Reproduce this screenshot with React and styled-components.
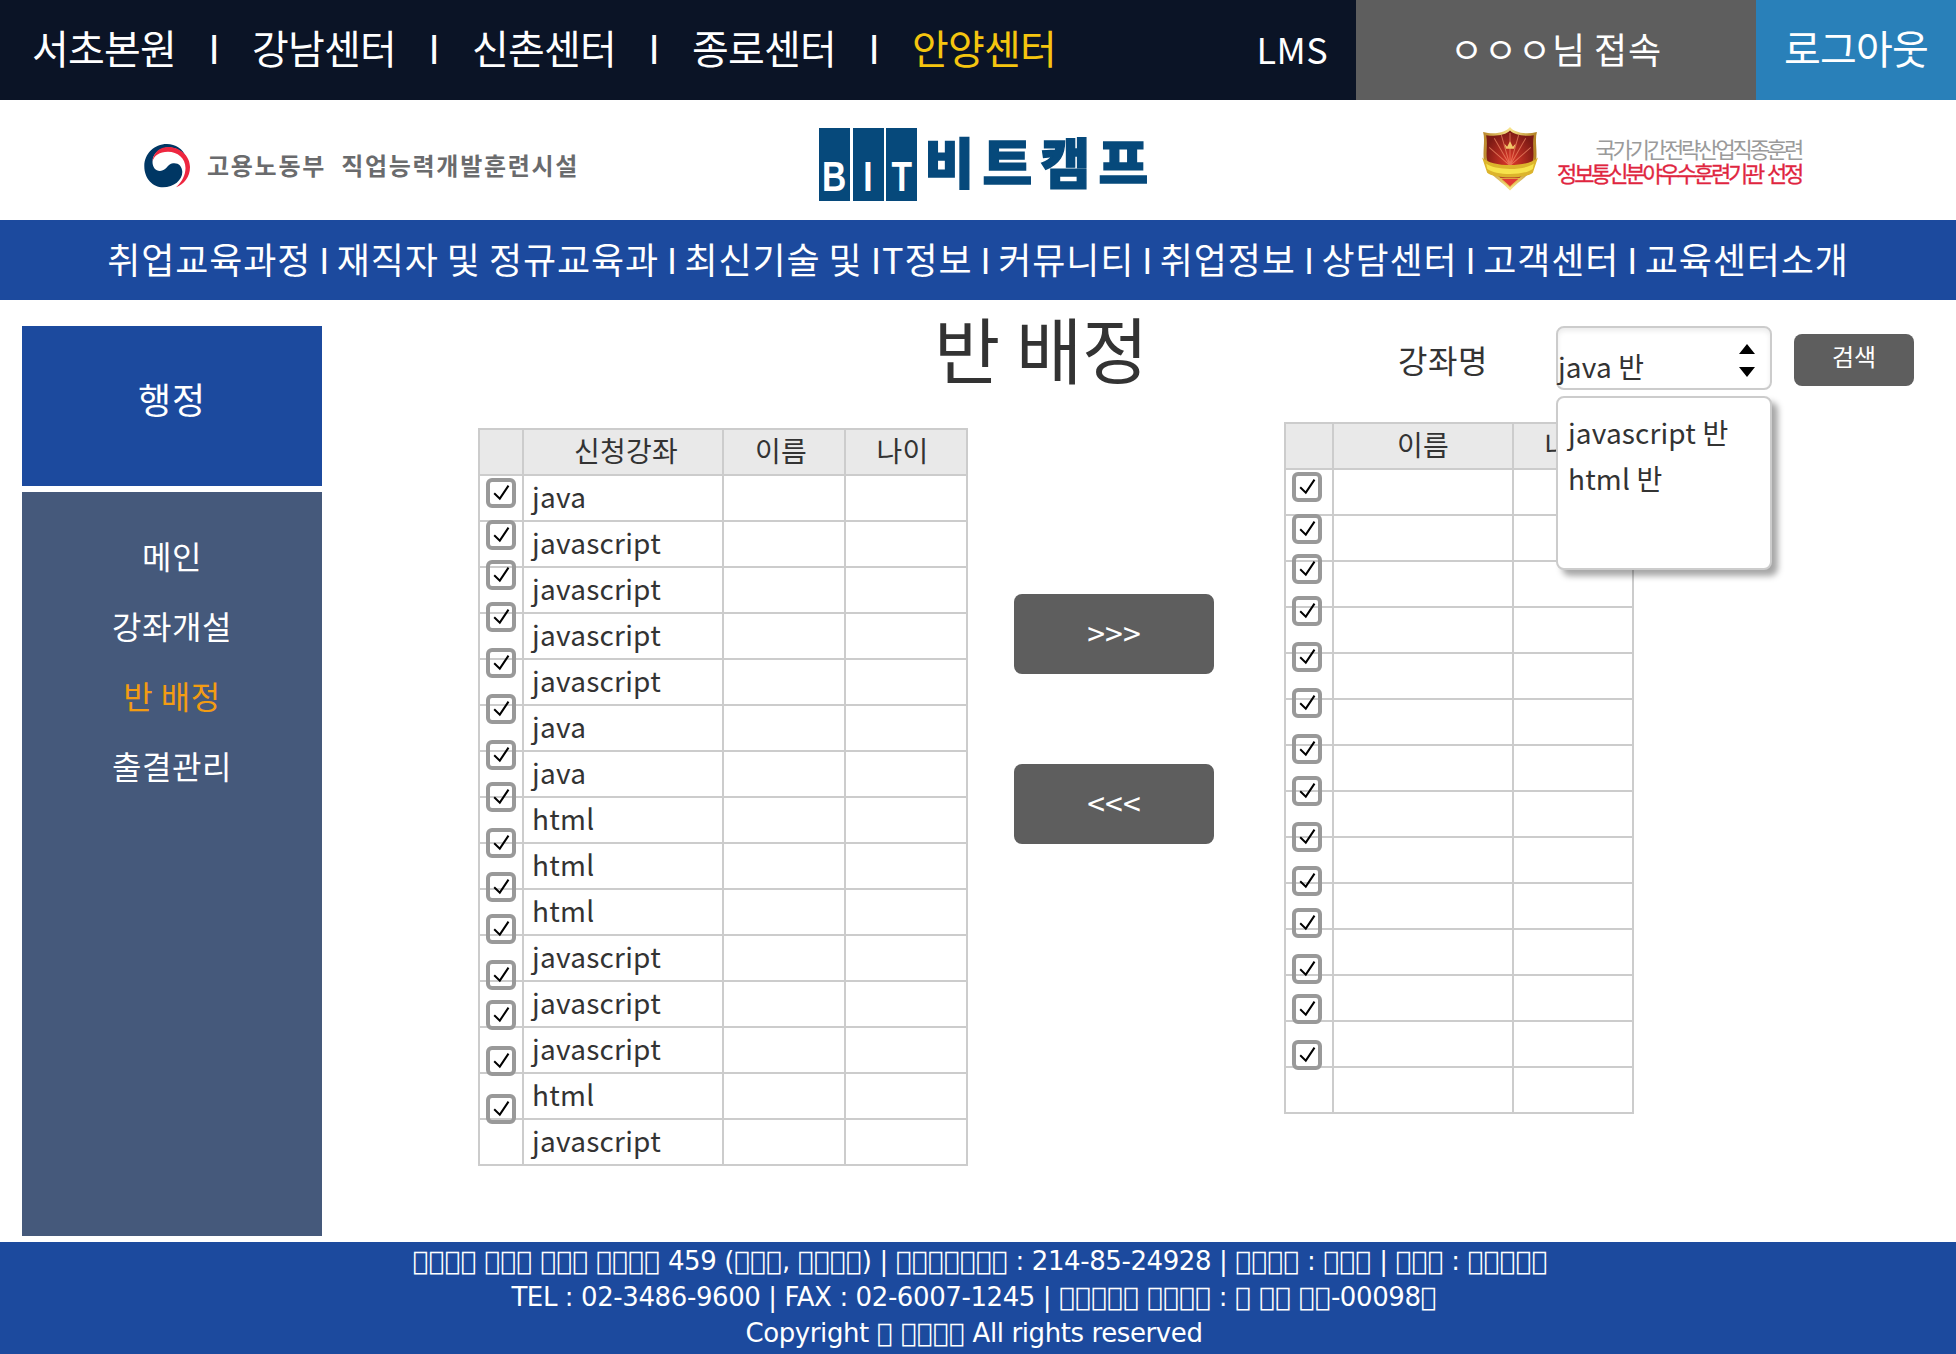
import React from "react";
import styled, { createGlobalStyle } from "styled-components";

const GlobalStyle = createGlobalStyle`
  * { box-sizing: border-box; }
  body {
    margin: 0;
    background: #fff;
    color: #333;
    font-family: "Noto Sans CJK KR", "Noto Sans", sans-serif;
  }
  ul { list-style: none; margin: 0; padding: 0; }
  button { font-family: inherit; border: 0; margin: 0; padding: 0; }
`;

const Page = styled.div`
  width: 1956px;
  height: 1354px;
  display: flex;
  flex-direction: column;
  overflow: hidden;
  white-space: nowrap;
`;

/* ---------- top bar ---------- */
const TopBar = styled.header`
  display: flex;
  height: 100px;
  flex: none;
  background: #0b1426;
  color: #fff;
  line-height: 1;
`;
const Centers = styled.nav`
  display: flex;
  flex: 1;
  align-items: center;
  padding: 0 0 7px 32px;
  font-size: 40px;
`;
const Center = styled.span`
  width: 144px;
  letter-spacing: -0.8px;
  color: ${(p) => (p.$active ? "#f5c50f" : "#fff")};
`;
const Bar = styled.span`
  width: 76px;
  text-align: center;
`;
const Lms = styled.span`
  display: flex;
  align-items: center;
  padding: 0 28px 4px 0;
  font-size: 36px;
  letter-spacing: 0.4px;
`;
const TopBox = styled.div`
  width: ${(p) => p.$width}px;
  display: flex;
  align-items: center;
  justify-content: center;
  background: ${(p) => p.$bg};
  font-size: ${(p) => p.$size}px;
  letter-spacing: ${(p) => p.$spacing}px;
  word-spacing: ${(p) => -p.$spacing}px;
  padding-bottom: ${(p) => p.$lift}px;
`;

/* ---------- logos ---------- */
const LogoRow = styled.div`
  display: flex;
  height: 120px;
  flex: none;
  align-items: flex-start;
`;
const Ministry = styled.div`
  display: flex;
  align-items: center;
  width: 819px;
  padding: 43px 0 0 143px;
`;
const MinistryName = styled.span`
  margin: -2px 0 0 16px;
  font-size: 24px;
  line-height: 40px;
  font-weight: 700;
  letter-spacing: 1.72px;
  word-spacing: 8px;
  color: #6a6b6d;
`;
const Brand = styled.div`
  display: flex;
  width: 663px;
  padding-top: 28px;
  color: #06497b;
`;
const BrandTile = styled.span`
  display: flex;
  align-items: flex-end;
  justify-content: center;
  width: 31px;
  height: 73px;
  margin-right: 2.5px;
  padding-bottom: 2px;
  background: #06497b;
  color: #fff;
  font: 700 42px/44px "Liberation Sans", sans-serif;
`;
const Condensed = styled.span`
  transform: scaleX(0.8);
`;
const BrandName = styled.span`
  margin-left: 5px;
  font-size: 54px;
  font-weight: 900;
  line-height: 66px;
  letter-spacing: 8.3px;
  -webkit-text-stroke: 1.4px #06497b;
`;
const Award = styled.div`
  display: flex;
  padding-top: 26px;
`;
const AwardText = styled.div`
  display: flex;
  flex-direction: column;
  align-items: flex-end;
  width: 260px;
  padding-top: 10px;
`;
const AwardLine = styled.span`
  font-size: 22px;
  line-height: 24px;
  letter-spacing: ${(p) => p.$spacing}px;
  word-spacing: 3px;
  margin-right: ${(p) => p.$spacing}px;
  color: ${(p) => p.$color};
  -webkit-text-stroke: ${(p) => p.$stroke}px ${(p) => p.$color};
`;

/* ---------- main navigation ---------- */
const MainNav = styled.nav`
  height: 80px;
  flex: none;
  display: flex;
  align-items: center;
  justify-content: center;
  gap: 7.8px;
  padding-bottom: 4px;
  background: #1c4a9e;
  color: #fff;
  font-size: 36px;
  line-height: 1;
  letter-spacing: 0.88px;
  word-spacing: -0.9px;
`;
const NavBar = styled.span`
  letter-spacing: -0.5px;
`;
const NavItem = styled.span`
  margin-right: -0.88px;
  padding-right: 0.88px;
`;

/* ---------- body ---------- */
const Body = styled.div`
  display: flex;
  height: 942px;
  flex: none;
  padding: 26px 0 6px 22px;
`;
const Sidebar = styled.aside`
  width: 300px;
  display: flex;
  flex-direction: column;
  gap: 6px;
  color: #fff;
  text-align: center;
`;
const SideTitle = styled.div`
  height: 160px;
  line-height: 144px;
  font-size: 36px;
  letter-spacing: 0.88px;
  background: #1c4a9e;
`;
const SideMenu = styled.ul`
  && { padding-top: 28px; }
  flex: 1;
  background: #45597b;
  font-size: 32px;
  line-height: 70px;
  letter-spacing: 0.56px;
`;
const SideItem = styled.li`
  color: ${(p) => (p.$active ? "#f39c12" : "#fff")};
`;
const Content = styled.main`
  flex: 1;
  display: flex;
  flex-direction: column;
`;
const Toolbar = styled.div`
  display: flex;
  align-items: flex-start;
  height: 96px;
`;
const Title = styled.h1`
  width: 464px;
  margin: -29px 0 0 612px;
  font-size: 72px;
  line-height: 100px;
  font-weight: 400;
  letter-spacing: -0.24px;
`;
const Label = styled.span`
  width: 158px;
  font-size: 32px;
  line-height: 67px;
  letter-spacing: 0.56px;
`;
const Select = styled.div`
  position: relative;
  width: 216px;
  height: 64px;
  display: flex;
  justify-content: space-between;
  border: 2px solid #ccc;
  border-radius: 8px;
  box-shadow: inset 0 3px 5px rgba(0, 0, 0, 0.08);
  font-size: 28px;
  letter-spacing: 0.15px;
`;
const SelectValue = styled.span`
  padding-top: 15px;
  line-height: 46px;
`;
const Arrows = styled.svg`
  margin: 15px 14px 0 0;
`;
const Options = styled.ul`
  && { padding: 11px 10px; }
  position: absolute;
  z-index: 3;
  left: -2px;
  top: 68px;
  width: 216px;
  height: 174px;
  background: #fff;
  border: 2px solid #ccc;
  border-radius: 8px;
  box-shadow: 6px 6px 6px rgba(0, 0, 0, 0.35);
  line-height: 46px;
`;
const Button = styled.button`
  width: ${(p) => p.$width}px;
  height: ${(p) => p.$height}px;
  font-size: ${(p) => p.$size}px;
  line-height: 1;
  background: #5e5e5e;
  color: #fff;
  border-radius: 8px;
`;
const SearchButton = styled(Button)`
  margin: 8px 0 0 22px;
  padding-bottom: 9px;
`;
const MoveButton = styled(Button)`
  padding-bottom: 4px;
`;
const Panels = styled.div`
  display: flex;
  align-items: flex-start;
  padding-left: 156px;
`;
const Moves = styled.div`
  display: flex;
  flex-direction: column;
  gap: 90px;
  margin: 172px 70px 0 46px;
`;

/* ---------- table ---------- */
const Grid = styled.div`
  display: flex;
  flex-direction: column;
  margin-top: ${(p) => p.$top || 0}px;
  border: solid #ccc;
  border-width: 0 2px 2px 0;
  font-size: 28px;
  line-height: 40px;
  letter-spacing: 0.24px;
`;
const Row = styled.div`
  display: grid;
  grid-template-columns: ${(p) => p.$cols};
  height: 46px;
`;
const Cell = styled.div`
  position: relative;
  border: solid #ccc;
  border-width: 2px 0 0 2px;
  padding-left: 8px;
`;
const HeadCell = styled(Cell)`
  background: #e9e9e9;
  text-align: center;
  padding: 0 ${(p) => p.$right || 0}px 0 ${(p) => p.$left || 0}px;
`;
const Check = styled.svg`
  position: absolute;
  z-index: 1;
  left: 6px;
  top: ${(p) => p.$top - 2}px;
`;

/* ---------- footer ---------- */
const Footer = styled.footer`
  height: 112px;
  flex: none;
  display: flex;
  flex-direction: column;
  align-items: center;
  padding-top: 1px;
  background: #1c4a9e;
  color: #fff;
  font-family: "DejaVu Sans", sans-serif;
  font-size: 26px;
  line-height: 36px;
  letter-spacing: -0.4px;
  white-space: pre;
`;
const FooterLine = styled.span`
  margin-left: ${(p) => p.$shift}px;
`;
const Boxes = styled.span`
  letter-spacing: 0.4px;
`;

const centers = ["서초본원", "강남센터", "신촌센터", "종로센터", "안양센터"];
const sections = [
  "취업교육과정", "재직자 및 정규교육과", "최신기술 및 IT정보", "커뮤니티",
  "취업정보", "상담센터", "고객센터", "교육센터소개",
];
const menu = ["메인", "강좌개설", "반 배정", "출결관리"];
const courses = [
  "java", "javascript", "javascript", "javascript", "javascript",
  "java", "java", "html", "html", "html",
  "javascript", "javascript", "javascript", "html", "javascript",
];
const drift = [4, 0, -6, -10, -10, -10, -10, -14, -14, -16, -20, -20, -26, -26, -24];

/* A number stands for a run of that many missing-glyph boxes. */
const footer = [
  { shift: 4, parts: [4, " ", 3, " ", 3, " ", 4, " 459 (", 3, ", ", 4, ") | ", 7, " : 214-85-24928 | ", 4, " : ", 3, " | ", 3, " : ", 5] },
  { shift: -8, parts: ["TEL : 02-3486-9600 | FAX : 02-6007-1245 | ", 5, " ", 4, " : ", 1, " ", 2, " ", 2, "-00098", 1] },
  { shift: -8, parts: ["Copyright ", 1, " ", 4, " All rights reserved"] },
];

const CheckBox = ({ top }) => (
  <Check $top={top} width="30" height="30" viewBox="0 0 30 30" fill="none">
    <rect x="2" y="2" width="26" height="26" rx="4" stroke="#999" strokeWidth="4" />
    <path d="M8.2 15.2L13.8 20.6L22.5 7.6" stroke="#000" strokeWidth="2" />
  </Check>
);

const Table = ({ cols, heads, rows, top }) => (
  <Grid $top={top}>
    <Row $cols={cols}>
      {heads.map((h, i) => (
        <HeadCell key={i} $left={h.left} $right={h.right}>{h.text}</HeadCell>
      ))}
    </Row>
    {rows.map((cells, r) => (
      <Row key={r} $cols={cols}>
        <Cell><CheckBox top={drift[r]} /></Cell>
        {cells.map((c, i) => <Cell key={i}>{c}</Cell>)}
      </Row>
    ))}
  </Grid>
);

const Emblem = () => (
  <svg width="48" height="46" viewBox="0 0 48 46">
    <path d="M24 1C11 1 1.300 11 1.300 23C1.300 36 10 44.300 20 44.300C31 44.300 39.300 37 39.300 29C39.300 23 35 19.500 30 20.300C24 21.300 23.500 27.800 17 28C12.500 28 9.500 24 9.500 19C9.500 10 17 4.500 26 4.500C34 4.500 40 9 43 14C40 6 32.500 1 24 1Z" fill="#003764" />
    <path d="M9.500 18.500C10 10 16.500 4 25.500 4C37 4 47 13 47 24C47 34 41 41.500 33 44.300C39 39 42.500 32 42.500 25C42.500 15 34.500 8.700 25 8.700C16.500 8.700 11 12.500 9.500 18.500Z" fill="#ee2740" />
  </svg>
);

const Shield = () => (
  <svg width="56" height="66" viewBox="1 1 55 65">
    <defs>
      <linearGradient id="gold" x1="0" x2="1">
        <stop offset="0" stopColor="#b9862a" />
        <stop offset=".5" stopColor="#f8e58a" />
        <stop offset="1" stopColor="#b07c1e" />
      </linearGradient>
      <radialGradient id="red" cx=".5" cy=".55" r=".55">
        <stop offset="0" stopColor="#e03a2a" />
        <stop offset="1" stopColor="#7c1a14" />
      </radialGradient>
    </defs>
    <path d="M28.500 2C32 7 43 10 55 7C53 14 55 22 54.500 32C54 47 40 52 28.500 64.500C17 52 3 47 2.500 32C2 22 4 14 2 7C14 10 25 7 28.500 2Z" fill="url(#gold)" />
    <path d="M28.500 5.500C33 10 42 11.500 52 10C50.500 18 52 24 51.500 32C50 45 40 49 28.500 61C17 49 7 45 5.500 32C5 24 6.500 18 5 10C15 11.500 24 10 28.500 5.500Z" fill="url(#red)" />
    <path d="M28.500 40L13 13M28.500 40L20 10M28.500 40V8M28.500 40L37 10M28.500 40L44 13M28.500 40L8 22M28.500 40L49 22" stroke="#f08a68" strokeWidth="1" opacity=".7" />
    <path d="M23 18.500L25.700 21.500L28.500 16L31.300 21.500L34 18.500L32.500 23.500H24.500Z" fill="#f2c76a" />
    <path d="M1 32C11 42 46 42 56 32L51 47C45 53 12 53 6 47Z" fill="#dcb42c" />
    <path d="M5 38C13 45 44 45 52 38L51 43C43 50 14 50 6 43Z" fill="#f7e34c" />
    <path d="M19 52.500H38L28.500 61Z" fill="#e23a35" stroke="#e8c34a" strokeWidth="1" />
  </svg>
);

export default function App() {
  return (
    <Page>
      <GlobalStyle />
      <TopBar>
        <Centers>
          {centers.map((c, i) => (
            <React.Fragment key={c}>
              {i > 0 && <Bar>I</Bar>}
              <Center $active={i === 4}>{c}</Center>
            </React.Fragment>
          ))}
        </Centers>
        <Lms>LMS</Lms>
        <TopBox $width={400} $bg="#5e5e5e" $size={36} $spacing={0.88} $lift={4}>ㅇㅇㅇ님 접속</TopBox>
        <TopBox $width={200} $bg="#2980b9" $size={40} $spacing={-0.8} $lift={7}>로그아웃</TopBox>
      </TopBar>

      <LogoRow>
        <Ministry>
          <Emblem />
          <MinistryName>고용노동부 직업능력개발훈련시설</MinistryName>
        </Ministry>
        <Brand>
          {["B", "I", "T"].map((l) => (
            <BrandTile key={l}><Condensed>{l}</Condensed></BrandTile>
          ))}
          <BrandName>비트캠프</BrandName>
        </Brand>
        <Award>
          <Shield />
          <AwardText>
            <AwardLine $color="#9a9a9a" $spacing={-3.1} $stroke={0}>국가기간전략산업직종훈련</AwardLine>
            <AwardLine $color="#e0253f" $spacing={-3.15} $stroke={0.3}>정보통신분야우수훈련기관 선정</AwardLine>
          </AwardText>
        </Award>
      </LogoRow>

      <MainNav>
        {sections.map((s, i) => (
          <React.Fragment key={s}>
            {i > 0 && <NavBar>I</NavBar>}
            <NavItem>{s}</NavItem>
          </React.Fragment>
        ))}
      </MainNav>

      <Body>
        <Sidebar>
          <SideTitle>행정</SideTitle>
          <SideMenu>
            {menu.map((m, i) => <SideItem key={m} $active={i === 2}>{m}</SideItem>)}
          </SideMenu>
        </Sidebar>
        <Content>
          <Toolbar>
            <Title>반 배정</Title>
            <Label>강좌명</Label>
            <Select>
              <SelectValue>java 반</SelectValue>
              <Arrows width="18" height="36" viewBox="0 0 18 36">
                <path d="M1 11L9 1L17 11ZM1 24H17L9 34Z" fill="#000" />
              </Arrows>
              <Options>
                <li>javascript 반</li>
                <li>html 반</li>
              </Options>
            </Select>
            <SearchButton $width={120} $height={52} $size={24}>검색</SearchButton>
          </Toolbar>
          <Panels>
            <Table
              top={6}
              cols="44px 200px 122px 122px"
              heads={[
                { text: "" },
                { text: "신청강좌", left: 6 },
                { text: "이름", right: 6 },
                { text: "나이", right: 7 },
              ]}
              rows={courses.map((c) => [c, "", ""])}
            />
            <Moves>
              <MoveButton $width={200} $height={80} $size={32}>&gt;&gt;&gt;</MoveButton>
              <MoveButton $width={200} $height={80} $size={32}>&lt;&lt;&lt;</MoveButton>
            </Moves>
            <Table
              cols="48px 180px 120px"
              heads={[{ text: "" }, { text: "이름" }, { text: "나이", right: 5 }]}
              rows={courses.slice(0, 14).map(() => ["", ""])}
            />
          </Panels>
        </Content>
      </Body>

      <Footer>
        {footer.map((line, i) => (
          <FooterLine key={i} $shift={line.shift}>
            {line.parts.map((p, j) =>
              typeof p === "number" ? <Boxes key={j}>{"\uE000".repeat(p)}</Boxes> : p
            )}
          </FooterLine>
        ))}
      </Footer>
    </Page>
  );
}
